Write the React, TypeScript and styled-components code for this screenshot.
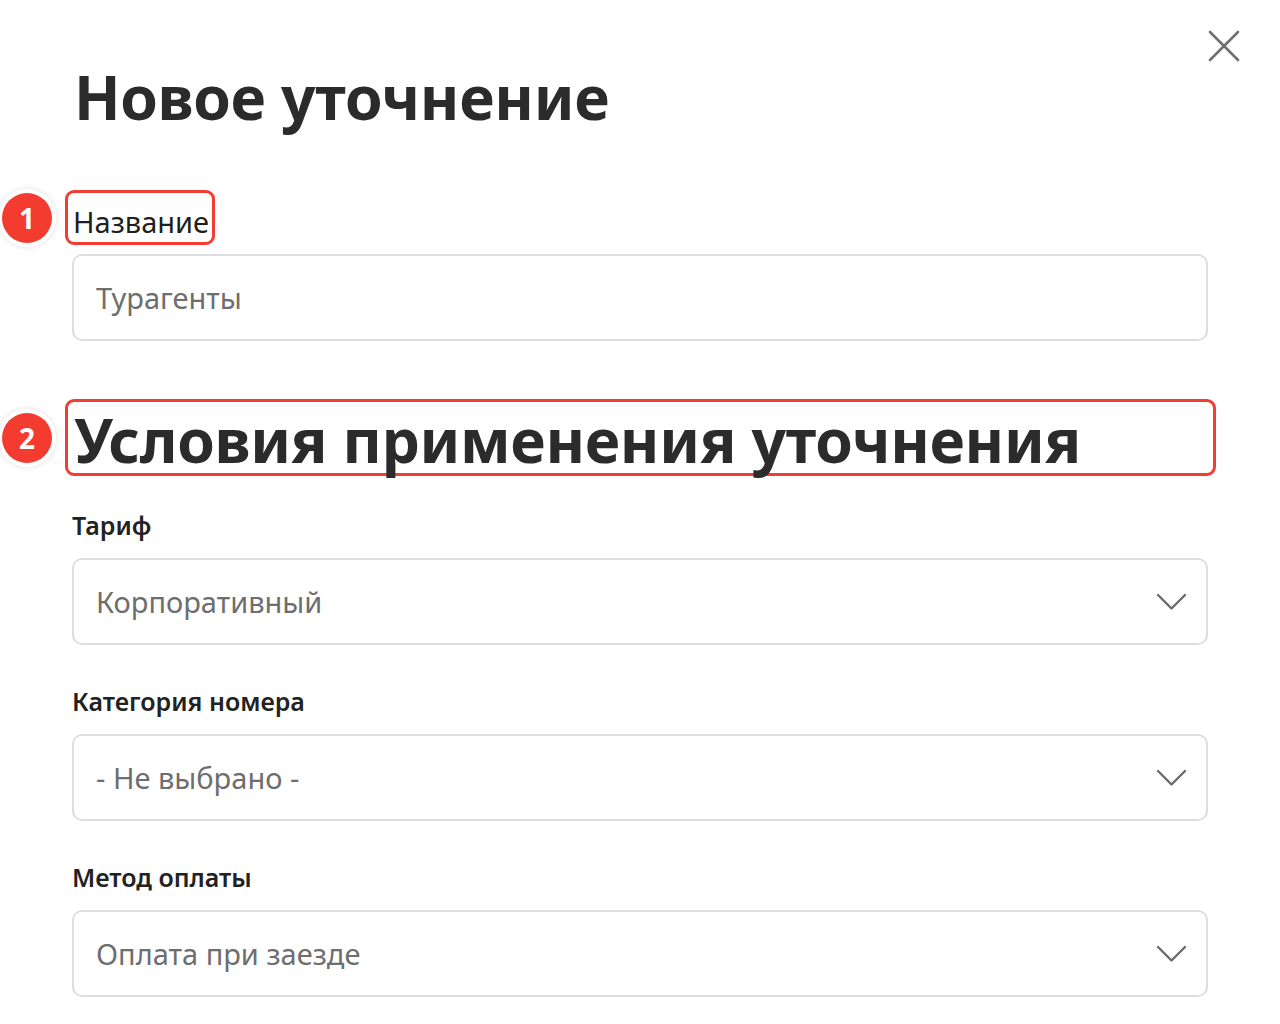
import styled, { createGlobalStyle } from 'styled-components'

const GlobalStyle = createGlobalStyle`
    body {
        margin: 0;
        background: #ffffff;
        font-family: "Noto Sans", "Open Sans", sans-serif;
        color: #2b2b2b;
    }
`

const fields = [
    { label: 'Тариф', value: 'Корпоративный' },
    { label: 'Категория номера', value: '- Не выбрано -' },
    { label: 'Метод оплаты', value: 'Оплата при заезде' },
]

function CloseIcon() {
    return (
        <svg width="32" height="32" viewBox="0 0 32 32" fill="none">
            <path d="M2 2L30 30M30 2L2 30" stroke="#707070" strokeWidth="2.6" strokeLinecap="round" />
        </svg>
    )
}

function Chevron() {
    return (
        <svg width="31" height="18" viewBox="0 0 31 18" fill="none">
            <path d="M2 2L15.5 15.5L29 2" stroke="#6a6a6a" strokeWidth="2.4" strokeLinecap="round" strokeLinejoin="round" />
        </svg>
    )
}

export default function App() {
    return (
        <Page>
            <GlobalStyle />
            <CloseButton aria-label="Закрыть">
                <CloseIcon />
            </CloseButton>

            <Title>Новое уточнение</Title>

            <Field>
                <Marked>
                    <Badge>1</Badge>
                    <NameLabel>Название</NameLabel>
                </Marked>
                <Input>Турагенты</Input>
            </Field>

            <SectionHead>
                <Badge>2</Badge>
                <Heading>Условия применения уточнения</Heading>
            </SectionHead>

            {fields.map(f => (
                <SelectField key={f.label}>
                    <Label>{f.label}</Label>
                    <Select>
                        <span>{f.value}</span>
                        <Chevron />
                    </Select>
                </SelectField>
            ))}
        </Page>
    )
}

const Page = styled.div`
    position: relative;
    width: 1280px;
    height: 1024px;
    box-sizing: border-box;
    padding: 54px 72px 0 72px;
    overflow: hidden;
`

const CloseButton = styled.button`
    position: absolute;
    top: 30px;
    right: 40px;
    padding: 0;
    border: none;
    background: none;
    display: flex;
`

const Title = styled.h1`
    margin: 0 0 0 2px;
    font-size: 60.5px;
    line-height: 86px;
    font-weight: 700;
    color: #2b2b2b;
    letter-spacing: -0.3px;
`

const Field = styled.div`
    margin-top: 50px;
    display: flex;
    flex-direction: column;
`

const Marked = styled.div`
    position: relative;
    align-self: flex-start;
    margin-left: -7px;
    padding: 0 3px 0 5px;
    border: 3px solid #f33d33;
    border-radius: 9px;
`

const Badge = styled.div`
    position: absolute;
    left: -66px;
    top: 50%;
    transform: translateY(-50%);
    width: 50px;
    height: 50px;
    border-radius: 50%;
    background: #f33b30;
    box-shadow: 0 0 0 4px #ffffff, 0 0 6px 4px rgba(0, 0, 0, 0.12);
    color: #ffffff;
    font-size: 28px;
    font-weight: 700;
    display: flex;
    align-items: center;
    justify-content: center;
`

const NameLabel = styled.div`
    font-size: 29px;
    line-height: 49px;
    color: #1f1f1f;
    padding-top: 4px;
    margin-bottom: -4px;
`

const Input = styled.div`
    margin-top: 9px;
    height: 87px;
    box-sizing: border-box;
    border: 2px solid #dedede;
    border-radius: 10px;
    padding: 0 22px;
    display: flex;
    align-items: center;
    font-size: 29px;
    color: #6e6e6e;
`

const SectionHead = styled.div`
    position: relative;
    margin: 58px -8px 0 -7px;
    padding: 0 0 0 6px;
    height: 77px;
    box-sizing: border-box;
    border: 3px solid #f33d33;
    border-radius: 9px;
    display: flex;
    align-items: center;
`

const Heading = styled.h2`
    margin: 0;
    padding-top: 4px;
    font-size: 60.5px;
    line-height: 71px;
    font-weight: 700;
    color: #2b2b2b;
    letter-spacing: -0.3px;
    white-space: nowrap;
`

const SelectField = styled.div`
    display: flex;
    flex-direction: column;
    margin-top: 39px;
    &:nth-of-type(3) {
        margin-top: 32px;
    }
`

const Label = styled.div`
    font-size: 25px;
    line-height: 34px;
    font-weight: 600;
    color: #222222;
    margin-bottom: 16px;
`

const Select = styled(Input)`
    margin-top: 0;
    justify-content: space-between;
    padding-right: 19px;
`
